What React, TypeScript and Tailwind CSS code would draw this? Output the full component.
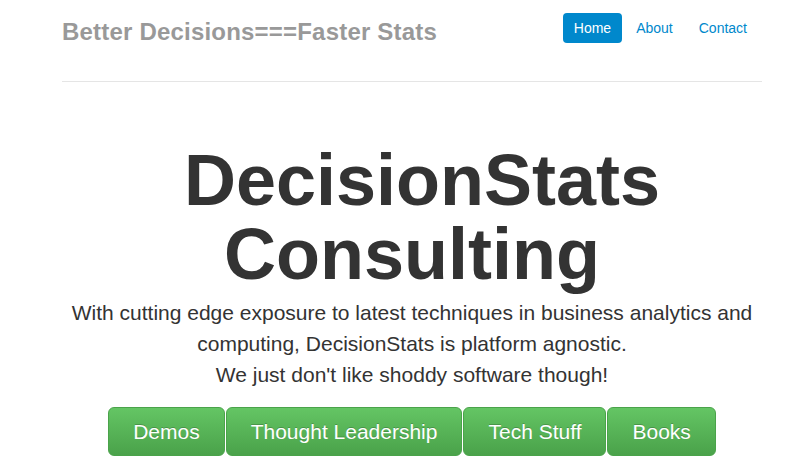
export default function App() {
  const links = ["About", "Contact"]
  const buttons = ["Demos", "Thought Leadership", "Tech Stuff", "Books"]

  return (
    <div className="min-h-[476px] bg-white font-['Liberation_Sans',Arial,sans-serif] text-[#333]">
      <div className="ml-[62px] w-[700px]">
        {/* header */}
        <div className="flex h-[82px] items-start justify-between border-b border-[#e5e5e5]">
          <h3 className="pt-[19px] text-[24px] font-bold leading-[26px] tracking-[0.2px] text-[#999]">
            Better Decisions===Faster Stats
          </h3>
          <ul className="mr-[3px] flex gap-[2px] pt-[13px] text-[14px]">
            <li>
              <a className="block rounded-[4px] bg-[#0088cc] px-[11px] py-[5px] leading-[20px] text-white">
                Home
              </a>
            </li>
            {links.map((l) => (
              <li key={l}>
                <a className="block rounded-[4px] px-[12px] py-[5px] leading-[20px] text-[#0088cc]">{l}</a>
              </li>
            ))}
          </ul>
        </div>

        {/* jumbotron */}
        <div className="text-center">
          <h1 className="mt-[61px] text-[72px] font-bold leading-[74px] text-[#333]">
            {"\u00a0"}DecisionStats Consulting
          </h1>
          <p className="mt-[6px] text-[21px] leading-[31px]">
            With cutting edge exposure to latest techniques in business analytics and computing,
            DecisionStats is platform agnostic.
            <br />
            We just don&apos;t like shoddy software though!
          </p>
          <div className="mt-[17px] flex justify-center gap-[1px]">
            {buttons.map((b) => (
              <a
                key={b}
                className="block rounded-[6px] border border-[#4aa34a] bg-gradient-to-b from-[#64c564] to-[#4aa24a] px-[24px] py-[9px] text-[21px] leading-[29px] text-white [text-shadow:0_-1px_0_rgba(0,0,0,0.2)]"
              >
                {b}
              </a>
            ))}
          </div>
        </div>
      </div>
    </div>
  )
}
